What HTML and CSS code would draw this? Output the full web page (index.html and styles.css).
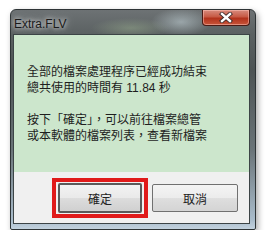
FILE: index.html
```html
<!DOCTYPE html>
<html>
<head>
<meta charset="utf-8">
<link rel="stylesheet" href="styles.css">
</head>
<body>
<div class="window">
  <div class="titlebar">
    <span class="title">Extra.FLV</span>
    <span class="close">
      <svg width="14" height="11" viewBox="0 0 14 11">
        <path d="M3 2 L11 9 M11 2 L3 9" stroke="#3a2a2a" stroke-width="4.2" stroke-linecap="square"/>
        <path d="M3 2 L11 9 M11 2 L3 9" stroke="#ffffff" stroke-width="2.4" stroke-linecap="square"/>
      </svg>
    </span>
  </div>
  <div class="client">
    <div class="message">
      <p>全部的檔案處理程序已經成功結束<br>總共使用的時間有 11.84 秒</p>
      <p>按下「確定」，可以前往檔案總管<br>或本軟體的檔案列表，查看新檔案</p>
    </div>
    <div class="buttons">
      <span class="highlight"><span class="btn btn-default">確定</span></span>
      <span class="btn">取消</span>
    </div>
  </div>
</div>
</body>
</html>
```

FILE: styles.css
```css
html, body {
  margin: 0;
  padding: 0;
  background: #ffffff;
}
body {
  font-family: "Liberation Sans", "Noto Sans CJK TC", sans-serif;
}
.window {
  margin: 9px 0 0 10px;
  width: 246px;
  height: 221px;
  box-sizing: border-box;
  border: 1px solid #2e3436;
  border-radius: 6px 6px 2px 2px;
  padding: 0 5px 5px 2px;
  display: flex;
  flex-direction: column;
  background:
    radial-gradient(ellipse 30px 14px at 170px 12px, rgba(190,205,210,0.6), rgba(190,205,210,0) 100%),
    radial-gradient(ellipse 40px 10px at 120px 18px, rgba(150,170,140,0.5), rgba(150,170,140,0) 100%),
    linear-gradient(to bottom, #6d7274 0px, #5b6162 24px, #4d5354 60px, #6a7478 140px, #a9bccb 210px, #c5d4e0 220px);
  box-shadow: 2px 3px 6px rgba(0,0,0,0.35);
}
.titlebar {
  height: 24px;
  display: flex;
  justify-content: space-between;
  align-items: flex-start;
}
.title {
  font-size: 12px;
  color: #1a1a1a;
  padding: 7px 0 0 1px;
  text-shadow: 0 0 4px rgba(255,255,255,0.9), 0 0 8px rgba(255,255,255,0.7);
}
.close {
  width: 48px;
  height: 16px;
  box-sizing: border-box;
  border: 1px solid #4a1a14;
  border-top: none;
  border-radius: 0 0 4px 4px;
  background: linear-gradient(to bottom, #d88b7e 0%, #c75a45 45%, #b2321c 55%, #c8553a 100%);
  display: flex;
  align-items: center;
  justify-content: center;
  box-shadow: inset 0 0 0 1px rgba(255,200,190,0.5);
}
.close svg {
  display: block;
}
.client {
  flex: 1;
  display: flex;
  flex-direction: column;
  border: 1px solid #3c4446;
  background: #f0f0f0;
}
.message {
  height: 108px;
  background: #cce6cc;
  padding: 29px 0 0 13px;
  font-size: 12px;
  line-height: 16px;
  color: #1e1e1e;
}
.message p {
  margin: 0 0 16px 0;
}
.buttons {
  flex: 1;
  display: flex;
  align-items: flex-start;
  padding: 6px 0 0 38px;
  gap: 4px;
}
.highlight {
  display: flex;
  border: 4px solid #e01a1a;
  padding: 1px 2px;
}
.btn {
  width: 86px;
  height: 28px;
  box-sizing: border-box;
  display: flex;
  align-items: center;
  justify-content: center;
  font-size: 12px;
  color: #222;
  border: 1px solid #707070;
  border-radius: 2px;
  background: linear-gradient(to bottom, #f4f4f4 0%, #ececec 48%, #dedede 52%, #d4d4d4 100%);
  margin-top: 6px;
}
.btn-default {
  width: 84px;
  height: 30px;
  margin-top: 0;
  border: 2px solid #5a5a5a;
  background: linear-gradient(to bottom, #f2f2f2 0%, #eaeaea 48%, #dcdcdc 52%, #d0d0d0 100%);
}
```
